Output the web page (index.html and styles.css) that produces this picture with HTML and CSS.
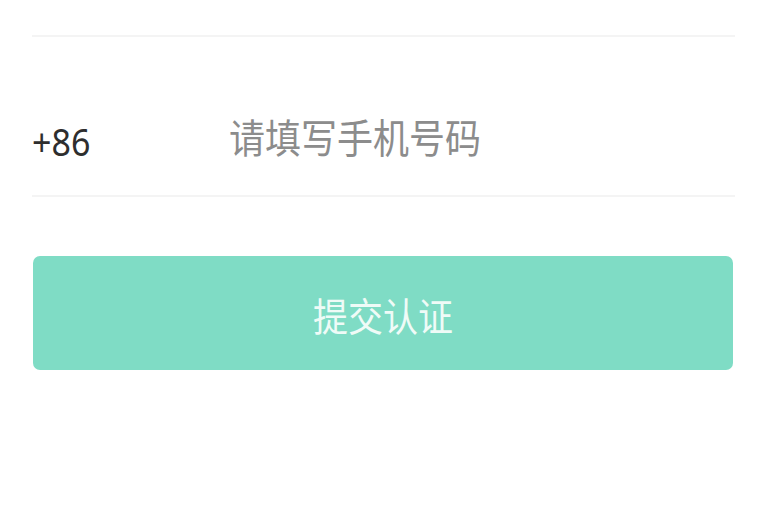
FILE: index.html
```html
<!DOCTYPE html>
<html lang="zh-CN">
<head>
<meta charset="utf-8">
<link rel="stylesheet" href="styles.css">
</head>
<body>
<div class="page">
  <div class="divider top"></div>
  <div class="row">
    <span class="code">+86</span>
    <span class="placeholder">请填写手机号码</span>
  </div>
  <div class="divider"></div>
  <div class="submit"><span class="submit-text">提交认证</span></div>
</div>
</body>
</html>
```
FILE: styles.css
```css
html, body {
  margin: 0;
  padding: 0;
  background: #ffffff;
  font-family: "Noto Sans", "Noto Sans CJK SC", sans-serif;
}
.page {
  padding: 0 33px 0 32px;
}
.divider {
  height: 2px;
  background: #f4f4f4;
}
.divider.top {
  margin-top: 35px;
}
.row {
  box-sizing: border-box;
  height: 158px;
  padding-top: 44px;
  display: flex;
  align-items: center;
}
.code {
  display: inline-block;
  width: 197px;
  font-size: 34px;
  color: #2e2e2e;
  transform: scaleY(1.15);
  transform-origin: left center;
  margin-top: 6px;
}
.placeholder {
  display: inline-block;
  font-family: "Noto Sans CJK SC", sans-serif;
  font-size: 36px;
  color: #8c8c8c;
  transform: scaleY(1.1);
  margin-top: -6px;
}
.submit {
  margin-top: 59px;
  margin-left: 1px;
  margin-right: 2px;
  height: 114px;
  border-radius: 7px;
  background: #7fdcc5;
  display: flex;
  align-items: center;
  justify-content: center;
}
.submit-text {
  display: inline-block;
  font-family: "Noto Sans CJK SC", sans-serif;
  font-size: 35px;
  color: #effbf7;
  transform: scaleY(1.12);
}
```
